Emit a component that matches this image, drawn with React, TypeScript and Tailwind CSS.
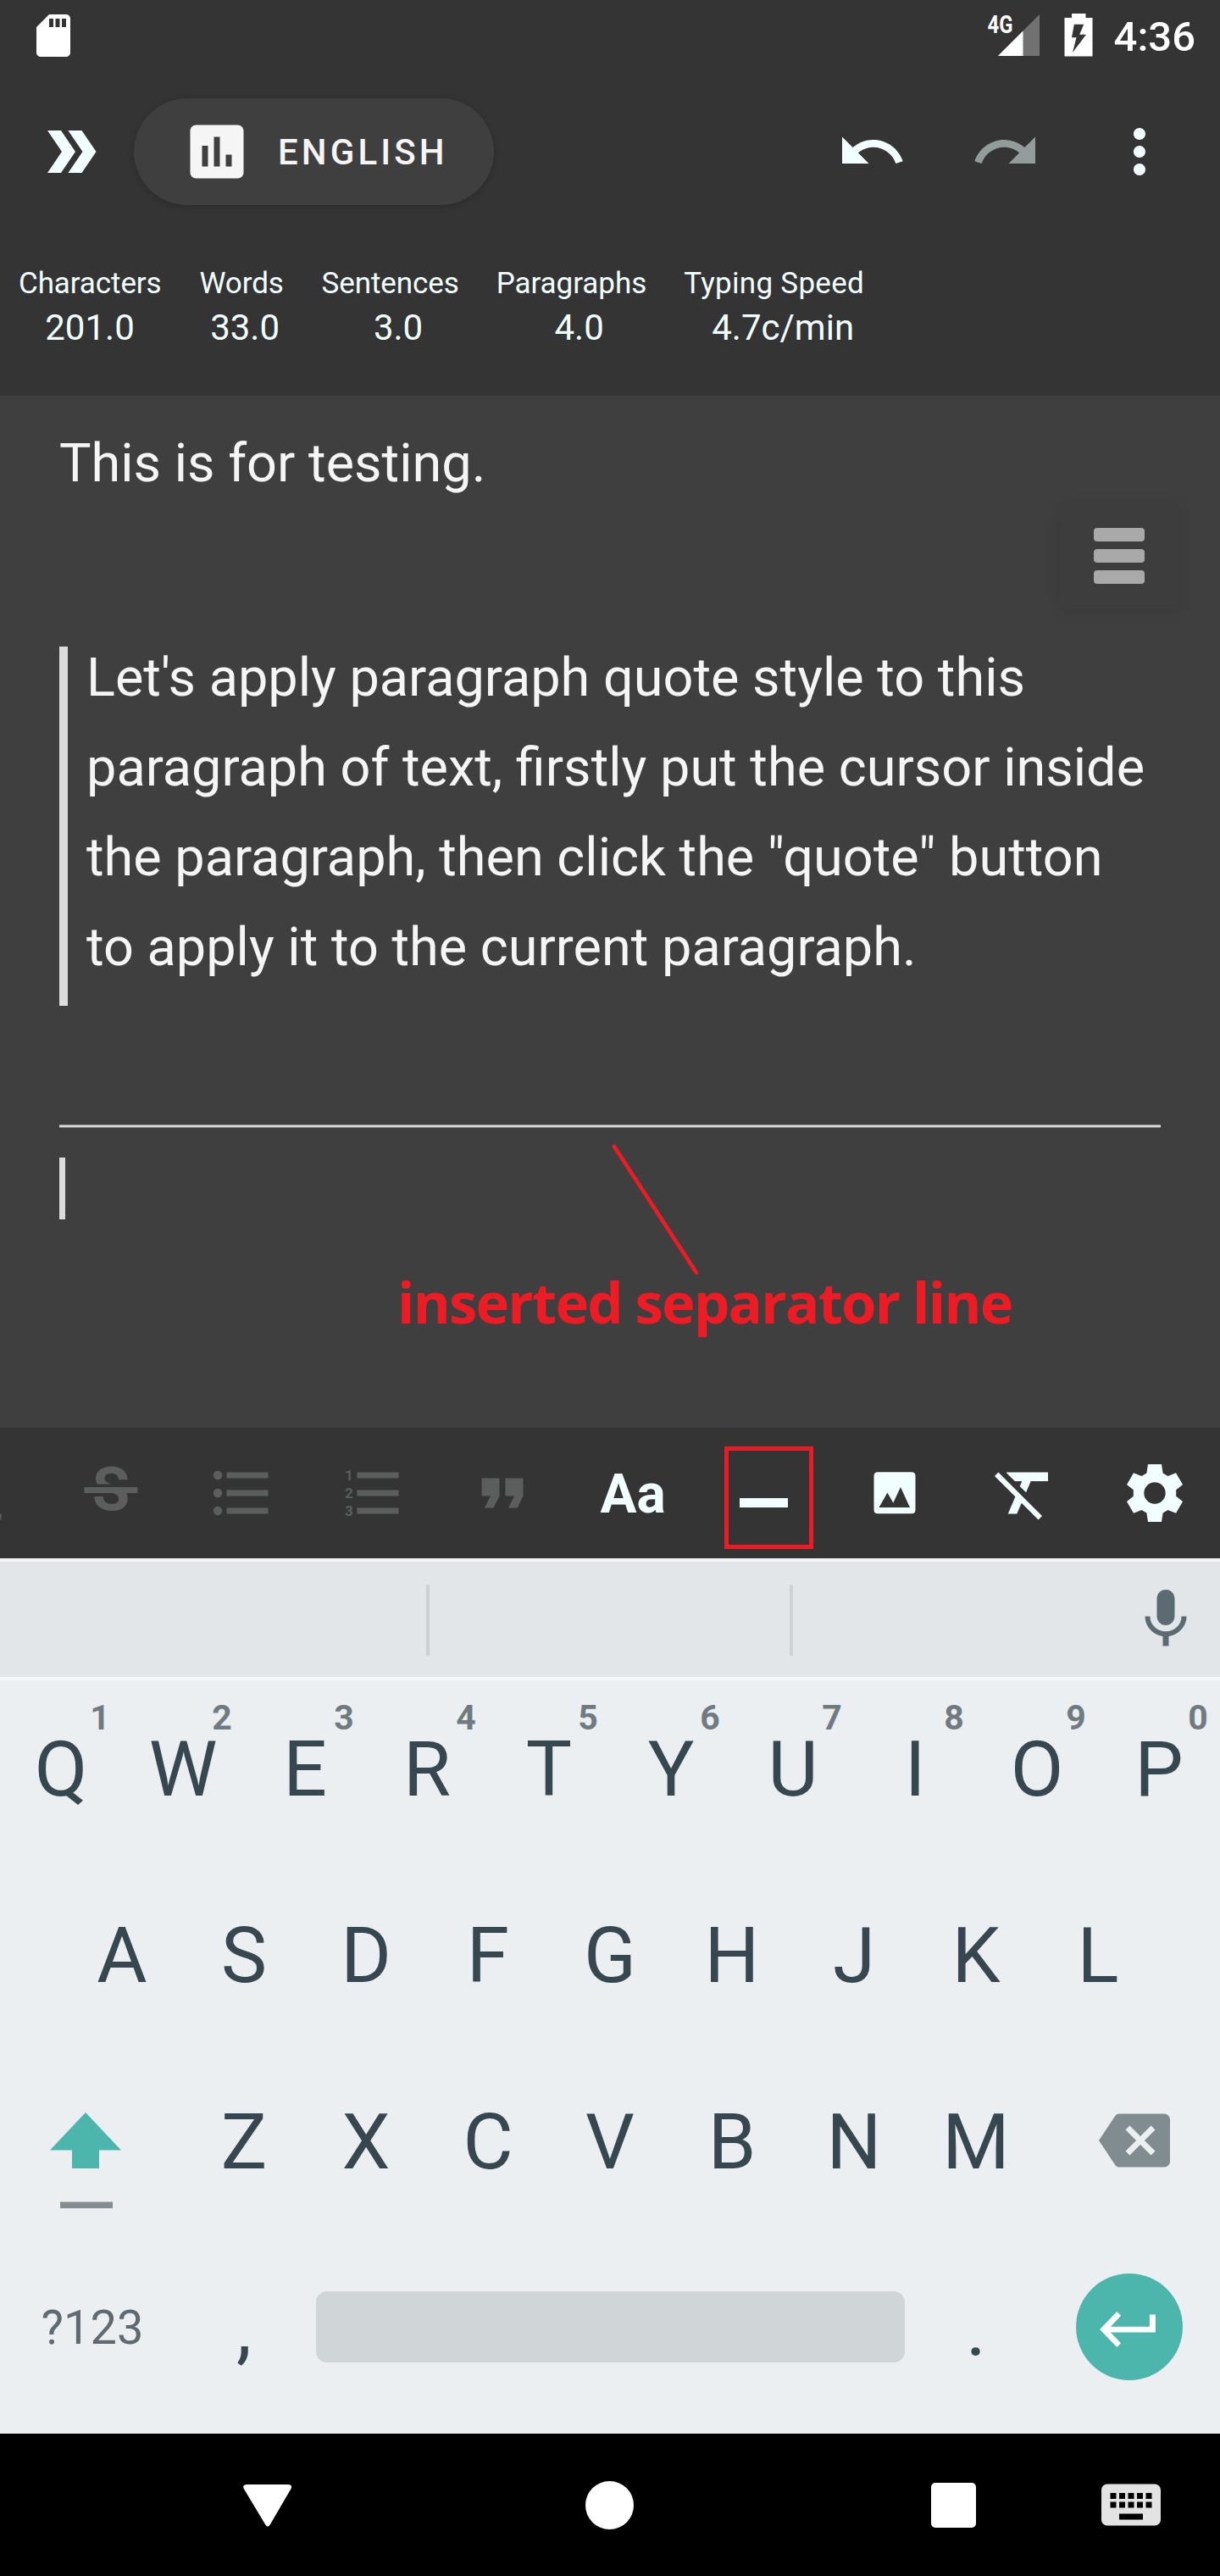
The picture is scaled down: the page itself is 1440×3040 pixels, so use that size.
import React from "react";

const AZURE = "#f2ffff";
const DIM = "#5c5e5e";

function Icon({ d, fill = AZURE }: { d: string; fill?: string }) {
  return (
    <svg className="size-[84px] shrink-0" viewBox="0 0 24 24" fill={fill}>
      <path d={d} fillRule="evenodd" />
    </svg>
  );
}

const PATHS = {
  sd: "M18 2h-8L4.02 8 4 20c0 1.1.9 2 2 2h12c1.1 0 2-.9 2-2V4c0-1.1-.9-2-2-2zm-6 6h-2V4h2v4zm3 0h-2V4h2v4zm3 0h-2V4h2v4z",
  chart:
    "M19 3H5c-1.1 0-2 .9-2 2v14c0 1.1.9 2 2 2h14c1.1 0 2-.9 2-2V5c0-1.1-.9-2-2-2zM9 17H7v-7h2v7zm4 0h-2V7h2v10zm4 0h-2v-4h2v4z",
  undo: "M12.5 8c-2.65 0-5.05.99-6.9 2.6L2 7v9h9l-3.62-3.62c1.39-1.16 3.16-1.88 5.12-1.88 3.54 0 6.55 2.31 7.6 5.5l2.37-.78C21.08 11.03 17.15 8 12.5 8z",
  redo: "M18.4 10.6C16.55 8.99 14.15 8 11.5 8c-4.65 0-8.58 3.03-9.96 7.22L3.9 16c1.05-3.19 4.05-5.5 7.6-5.5 1.95 0 3.73.72 5.12 1.88L13 16h9V7l-3.6 3.6z",
  more: "M12 8c1.1 0 2-.9 2-2s-.9-2-2-2-2 .9-2 2 .9 2 2 2zm0 2c-1.1 0-2 .9-2 2s.9 2 2 2 2-.9 2-2-.9-2-2-2zm0 6c-1.1 0-2 .9-2 2s.9 2 2 2 2-.9 2-2-.9-2-2-2z",
  underline:
    "M12 17c3.31 0 6-2.69 6-6V3h-2.5v8c0 1.93-1.57 3.5-3.5 3.5S8.5 12.93 8.5 11V3H6v8c0 3.31 2.69 6 6 6zm-7 2v2h14v-2H5z",
  strike:
    "M6.85 7.08C6.85 4.37 9.45 3 12.24 3c1.64 0 3 .49 3.9 1.28.77.65 1.46 1.73 1.46 3.24h-3.01c0-.31-.05-.59-.15-.85-.29-.86-1.2-1.28-2.25-1.28-1.86 0-2.34 1.02-2.34 1.7 0 .48.25.88.74 1.21.38.25.77.48 1.41.7H7.39c-.21-.34-.54-.89-.54-1.92zM21 12v-2H3v2h9.62c1.15.45 1.96.75 1.96 1.97 0 1-.81 1.67-2.28 1.67-1.54 0-2.93-.54-2.93-2.51H6.4c0 .55.08 1.13.24 1.58.81 2.29 3.29 3.3 5.67 3.3 2.27 0 5.3-.89 5.3-4.05 0-.3-.01-1.16-.48-1.94H21V12z",
  bullets:
    "M4 10.5c-.83 0-1.5.67-1.5 1.5s.67 1.5 1.5 1.5 1.5-.67 1.5-1.5-.67-1.5-1.5-1.5zm0-6c-.83 0-1.5.67-1.5 1.5S3.17 7.5 4 7.5 5.5 6.83 5.5 6 4.83 4.5 4 4.5zm0 12c-.83 0-1.5.68-1.5 1.5s.68 1.5 1.5 1.5 1.5-.68 1.5-1.5-.67-1.5-1.5-1.5zM7 19h14v-2H7v2zm0-6h14v-2H7v2zm0-8v2h14V5H7z",
  quote: "M6 17h3l2-4V7H5v6h3zm8 0h3l2-4V7h-6v6h3z",
  clear:
    "M3.27 5L2 6.27l6.97 6.97L6.5 19h3l1.57-3.66L16.73 21 18 19.73 3.55 5.27 3.27 5zM6 5v.18L8.82 8h2.4l-.72 1.68 2.1 2.1L14.21 8H20V5H6z",
  mic: "M12 14c1.66 0 2.99-1.34 2.99-3L15 5c0-1.66-1.34-3-3-3S9 3.34 9 5v6c0 1.66 1.34 3 3 3zm5.3-3c0 3-2.54 5.1-5.3 5.1S6.7 14 6.7 11H5c0 3.41 2.72 6.23 6 6.72V21h2v-3.28c3.28-.48 6-3.3 6-6.72h-1.7z",
  backspace:
    "M22 3H7c-.69 0-1.23.35-1.59.88L0 12l5.41 8.11c.36.53.9.89 1.59.89h15c1.1 0 2-.9 2-2V5c0-1.1-.9-2-2-2zm-3 12.59L17.59 17 14 13.41 10.41 17 9 15.59 12.59 12 9 8.41 10.41 7 14 10.59 17.59 7 19 8.41 15.41 12 19 15.59z",
  keyboard:
    "M20 5H4c-1.1 0-1.99.9-1.99 2L2 17c0 1.1.9 2 2 2h16c1.1 0 2-.9 2-2V7c0-1.1-.9-2-2-2zm-9 3h2v2h-2V8zm0 3h2v2h-2v-2zM8 8h2v2H8V8zm0 3h2v2H8v-2zm-1 2H5v-2h2v2zm0-3H5V8h2v2zm9 7H8v-2h8v2zm0-4h-2v-2h2v2zm0-3h-2V8h2v2zm3 3h-2v-2h2v2zm0-3h-2V8h2v2z",
};

function StatusBar() {
  return (
    <div className="flex h-[84px] items-center pl-[33px] pr-[29px] text-white">
      <svg className="size-[60px]" viewBox="0 0 24 24" fill="#fff">
        <path d={PATHS.sd} />
      </svg>
      <svg className="ml-auto h-[84px] w-[70px]" viewBox="1160 0 70 84">
        <text x="1165.5" y="39" fontSize="29" fontWeight="700" fill="#fff" textLength="30" lengthAdjust="spacingAndGlyphs">
          4G
        </text>
        <path d="M1178 66L1227 17V66z" fill="#717171" />
        <path d="M1178 66L1207.5 36.5V66z" fill="#fff" />
      </svg>
      <svg className="ml-[24px] h-[84px] w-[40px]" viewBox="1254 0 40 84">
        <path
          fillRule="evenodd"
          fill="#fff"
          d="M1265 16h16.5v5h8v45.5h-33V21h8.5zM1267.8 28.7L1265 44.3h5.5L1266 62L1282 40.7h-7.8L1279.2 28.7z"
        />
      </svg>
      <span className="ml-[21px] text-[49px] font-medium leading-[60px] pt-[4px]">4:36</span>
    </div>
  );
}

function Toolbar() {
  return (
    <div className="flex h-[190px] items-center pl-[42px] pr-[53px]">
      <svg className="size-[84px]" viewBox="42 137 84 84" fill={AZURE}>
        <path d="M56 154H72L89 179L72 204H56L73 179z" />
        <path d="M80.4 154H96.5L113.5 179L96.5 204H80.4L97.5 179z" />
      </svg>
      <button className="ml-8 flex h-[126px] w-[425px] items-center rounded-full bg-[#3f3f3f] pl-[56px] shadow-[0_2px_7px_rgba(0,0,0,0.2)]">
        <Icon d={PATHS.chart} fill="#f5f5f5" />
        <span className="ml-[30px] pt-px text-[42px] font-medium leading-[50px] tracking-[4.1px] text-[#f5f5f5]">ENGLISH</span>
      </button>
      <div className="ml-auto flex gap-[74px]">
        <Icon d={PATHS.undo} />
        <Icon d={PATHS.redo} fill="#939b9b" />
        <Icon d={PATHS.more} />
      </div>
    </div>
  );
}

const STATS: [string, string, string, string][] = [
  ["Characters", "201.0", "tracking-[-0.1px]", "w-[212px]"],
  ["Words", "33.0", "tracking-[-0.1px]", "w-[145px] pl-[8px]"],
  ["Sentences", "3.0", "tracking-[-0.1px]", "w-[205px] pl-[20px]"],
  ["Paragraphs", "4.0", "tracking-[-0.05px]", "w-[220px] pl-[20px]"],
  ["Typing Speed", "4.7c/min", "tracking-[0.3px]", "w-[257px] pl-[21px]"],
];

function Stats() {
  return (
    <div className="flex pt-[37px] text-[#f2ffff]">
      {STATS.map(([label, value, spacing, box]) => (
        <div key={label} className="flex flex-col">
          <span className={"whitespace-nowrap px-[22px] text-center text-[35px] leading-[48px] " + spacing}>{label}</span>
          <span className={"whitespace-nowrap text-center text-[42px] leading-[56px] " + box}>{value}</span>
        </div>
      ))}
    </div>
  );
}

function Editor() {
  return (
    <main className="relative h-[1218px] bg-[#3f3f3f] px-[70px] pt-[27px] text-[63px] leading-[106px] text-[#f5f5f5]">
      <p>This is for testing.</p>
      <blockquote className="mt-[163px] flow-root h-[424px] border-l-[10px] border-[#dcdcdc] pl-[22px]">
        <p className="-mt-[16px] whitespace-nowrap">
          Let's apply paragraph quote style to this
          <br />
          paragraph of text, firstly put the cursor inside
          <br />
          the paragraph, then click the "quote" button
          <br />
          to apply it to the current paragraph.
        </p>
      </blockquote>
      <div className="mt-[140px] h-[4px] border-y border-[#8e8e8e] bg-[#dcdcdc]" />
      <div className="mt-[35px] h-[73px] w-[7px] bg-[#dcdcdc]" />

      <button className="absolute left-[1251px] top-[125px] flex h-[127px] w-[140px] flex-col items-center justify-center gap-[9px] rounded-[7px] bg-[#3d3d3d] shadow-[0_4px_18px_rgba(0,0,0,0.09)]">
        <span className="h-[16px] w-[60px] rounded-[4px] bg-[#a9a9a9]" />
        <span className="h-[16px] w-[60px] rounded-[4px] bg-[#a9a9a9]" />
        <span className="h-[16px] w-[60px] rounded-[4px] bg-[#a9a9a9]" />
      </button>

      <svg className="absolute left-[715px] top-[875px] h-[170px] w-[120px]" viewBox="715 1342 120 170">
        <path d="M725 1353L822 1502" stroke="#ed1c24" strokeWidth="4.6" strokeLinecap="round" />
      </svg>
      <p className="absolute left-[469px] top-[1029px] whitespace-nowrap font-['Open_Sans',sans-serif] text-[67px] font-bold leading-[80px] tracking-[-1.75px] text-[#ed1c24]">
        inserted separator line
      </p>
    </main>
  );
}

function FormatBar() {
  return (
    <div className="h-[154px] overflow-hidden bg-[#343434]">
      <div className="-ml-[65px] flex h-[154px] items-center gap-[70px]">
        <Icon d={PATHS.underline} fill={DIM} />
        <Icon d={PATHS.strike} fill={DIM} />
        <Icon d={PATHS.bullets} fill={DIM} />
        <svg className="size-[84px] shrink-0" viewBox="0 0 84 84" fill={DIM} fontSize="17" fontWeight="700">
          <path d="M24.5 17.5h49v7h-49zM24.5 38.5h49v7h-49zM24.5 59.5h49v7h-49z" />
          <text x="10" y="27">1</text>
          <text x="10" y="47.5">2</text>
          <text x="10" y="69">3</text>
        </svg>
        <Icon d={PATHS.quote} fill={DIM} />
        <span className="flex h-[84px] w-[84px] shrink-0 items-center justify-center pt-[3px] text-[64px] font-bold leading-[84px] text-[#f2ffff]">
          Aa
        </span>
        <div className="relative flex size-[84px] shrink-0">
          <span className="ml-[14px] mt-[48px] h-[11px] w-[57px] bg-[#f2ffff]" />
          <span className="absolute -left-[4px] -top-[13px] h-[121px] w-[105px] border-[5px] border-[#ed1c24]" />
        </div>
        <svg className="size-[84px] shrink-0" viewBox="1013 1720 84 84" fill={AZURE} fillRule="evenodd">
          <path d="M1036 1737.3h40q4.5 0 4.5 4.5v40q0 4.5-4.5 4.5h-40q-4.5 0-4.5-4.5v-40q0-4.5 4.5-4.5zM1037.5 1779h36.5L1063 1755l-8.7 18.5l-6.9-12z" />
        </svg>
        <Icon d={PATHS.clear} />
        <svg className="size-[84px] shrink-0" viewBox="-42 -42 84 84" fill={AZURE} fillRule="evenodd">
          <path d="M-8-34H8L9.6-23.5L15.5-20L25-23.7L33-10L25.2-3.8V3.8L33 10L25 23.7L15.5 20L9.6 23.5L8 34H-8L-9.6 23.5L-15.5 20L-25 23.7L-33 10L-25.2 3.8V-3.8L-33-10L-25-23.7L-15.5-20L-9.6-23.5zM12.7 0A12.7 12.7 0 1 0-12.7 0A12.7 12.7 0 1 0 12.7 0z" />
        </svg>
      </div>
    </div>
  );
}

function Key({ label, hint }: { label: string; hint?: string }) {
  return (
    <span className="relative flex h-[220px] w-[144px] justify-center pt-px text-[91px] leading-[108px] text-[#37474f]">
      {label}
      {hint && (
        <span className="absolute left-[68px] -top-[31px] w-[100px] text-center text-[41px] font-bold leading-[50px] text-[#6f7b80]">
          {hint}
        </span>
      )}
    </span>
  );
}

function Keyboard() {
  return (
    <div className="h-[1033px] bg-[#ebeff2]">
      <div className="flex h-[144px] items-center border-b-4 border-t-4 border-b-[#f4f7f9] border-t-[#f2f3f5] bg-[#e2e6e9]">
        <div className="mt-[2px] h-[84px] w-[507px] border-r-[4px] border-[#cdd2d5]" />
        <div className="mt-[2px] h-[84px] w-[429px] border-r-[4px] border-[#cdd2d5]" />
        <div className="ml-auto mr-[22px] flex">
          <Icon d={PATHS.mic} fill="#5c6a71" />
        </div>
      </div>
      <div className="pt-[50px]">
        <div className="flex h-[220px]">
          {"QWERTYUIOP".split("").map((k, i) => (
            <Key key={k} label={k} hint={String((i + 1) % 10)} />
          ))}
        </div>
        <div className="flex h-[220px] justify-center">
          {"ASDFGHJKL".split("").map((k) => (
            <Key key={k} label={k} />
          ))}
        </div>
        <div className="flex h-[220px]">
          <svg className="h-[150px] w-[216px]" viewBox="0 2473 216 150">
            <path d="M101 2493L143 2537.5H117V2559H85V2537.5H59z" fill="#4db6ac" />
            <path d="M71 2598.5H133V2606H71z" fill="#838d91" />
          </svg>
          {"ZXCVBNM".split("").map((k) => (
            <Key key={k} label={k} />
          ))}
          <div className="ml-[73px] mt-[11px] flex">
            <Icon d={PATHS.backspace} fill="#818c90" />
          </div>
        </div>
        <div className="flex h-[179px]">
          <span className="w-[216px] pl-[2px] pt-[21px] text-center text-[56px] leading-[66px] text-[#5f6b70]">?123</span>
          <Key label="," />
          <span className="ml-[13px] mr-[12px] mt-[11px] h-[84px] w-[695px] rounded-[13px] bg-[#d0d5d8]" />
          <Key label="." />
          <svg className="ml-[46px] -mt-[10px] size-[126px]" viewBox="1269.5 2683.5 126 126">
            <circle cx="1332.5" cy="2746.5" r="63" fill="#4db6ac" />
            <path
              d="M1297.6 2749.5L1317.8 2728.6L1322.6 2733.3L1310.4 2746.2H1356.4V2732H1363.4V2753H1310.4L1322.6 2765.7L1317.8 2770.4z"
              fill="#fff"
            />
          </svg>
        </div>
      </div>
    </div>
  );
}

function NavBar() {
  return (
    <div className="flex h-[168px] items-center bg-black">
      <svg className="ml-[286px] h-[60px] w-[60px]" viewBox="286 2926 60 60" fill="#fff">
        <path d="M292 2932H340Q345.5 2932 343.5 2937L319 2979Q316 2984 313 2979L287.8 2937Q285.5 2932 292 2932z" />
      </svg>
      <span className="ml-[345px] size-[57px] rounded-full bg-white" />
      <span className="ml-[351px] mt-px size-[53px] rounded-[5px] bg-white" />
      <div className="ml-[141px] flex">
        <Icon d={PATHS.keyboard} fill="#e3e3e3" />
      </div>
    </div>
  );
}

export default function App() {
  return (
    <div className="flex h-[3040px] w-[1440px] flex-col overflow-hidden font-['Roboto',sans-serif]">
      <header className="h-[467px] shrink-0 bg-[#343434]">
        <StatusBar />
        <Toolbar />
        <Stats />
      </header>
      <Editor />
      <FormatBar />
      <Keyboard />
      <NavBar />
    </div>
  );
}
